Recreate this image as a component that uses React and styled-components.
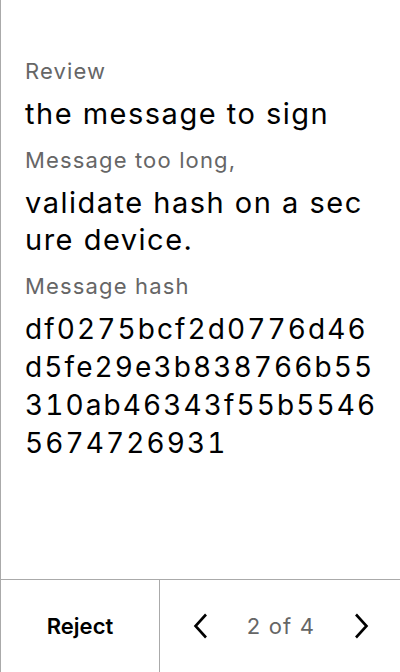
import React from 'react';
import styled, { createGlobalStyle } from 'styled-components';

const GlobalStyle = createGlobalStyle`
  html, body {
    margin: 0;
    padding: 0;
    background: #fff;
  }
  body {
    font-family: Inter, "Noto Sans", sans-serif;
  }
`;

const Screen = styled.div`
  width: 400px;
  height: 672px;
  box-sizing: border-box;
  border-left: 1px solid #aaa;
  display: flex;
  flex-direction: column;
  background: #fff;
`;

const Content = styled.div`
  flex: 1;
  padding: 56px 20px 0 24px;
  display: flex;
  flex-direction: column;
`;

const Label = styled.div`
  font-size: 22px;
  line-height: 30px;
  letter-spacing: 1.15px;
  color: #666;
  margin-top: ${(p) => (p.$first ? '0' : '13px')};
`;

const Value = styled.div`
  font-size: 29px;
  line-height: 37px;
  letter-spacing: 1.5px;
  color: #000;
  margin-top: 9px;
  word-break: break-all;
`;

const HashLine = styled.div`
  font-size: 28px;
  line-height: 38px;
  letter-spacing: 2.1px;
  font-variant-numeric: tabular-nums;
  white-space: nowrap;
  color: #000;
`;

const Footer = styled.div`
  height: 92px;
  border-top: 1px solid #aaa;
  display: grid;
  grid-template-columns: 159px 1fr;
`;

const RejectButton = styled.button`
  border: none;
  border-right: 1px solid #aaa;
  background: none;
  font-family: Inter, "Noto Sans", sans-serif;
  font-size: 22px;
  font-weight: 600;
  color: #000;
  padding: 0;
  cursor: pointer;
`;

const Pager = styled.div`
  display: flex;
  align-items: center;
  justify-content: space-between;
  padding: 0 24px 0 26px;
`;

const ArrowButton = styled.button`
  width: 30px;
  height: 40px;
  border: none;
  background: none;
  padding: 0;
  display: flex;
  align-items: center;
  justify-content: center;
  cursor: pointer;
`;

const PageText = styled.span`
  font-size: 22px;
  letter-spacing: 1.2px;
  color: #666;
`;

const Chevron = ({ dir }) => (
  <svg width="16" height="26" viewBox="0 0 16 26" fill="none">
    <path
      d={dir === 'left' ? 'M13 1.5 L2.5 13 L13 24.5' : 'M3 1.5 L13.5 13 L3 24.5'}
      stroke="#000"
      strokeWidth="2.6"
    />
  </svg>
);

const hash = 'df0275bcf2d0776d46d5fe29e3b838766b55310ab46343f55b55465674726931';
const hashLines = hash.match(/.{1,18}/g);

const App = () => {
  return (
    <>
      <GlobalStyle />
      <Screen>
        <Content>
          <Label $first>Review</Label>
          <Value>the message to sign</Value>
          <Label>Message too long,</Label>
          <Value>validate hash on a secure device.</Value>
          <Label>Message hash</Label>
          <Value>
            {hashLines.map((line, i) => (
              <HashLine key={i}>{line}</HashLine>
            ))}
          </Value>
        </Content>
        <Footer>
          <RejectButton>Reject</RejectButton>
          <Pager>
            <ArrowButton><Chevron dir="left" /></ArrowButton>
            <PageText>2 of 4</PageText>
            <ArrowButton><Chevron dir="right" /></ArrowButton>
          </Pager>
        </Footer>
      </Screen>
    </>
  );
};

export default App;
